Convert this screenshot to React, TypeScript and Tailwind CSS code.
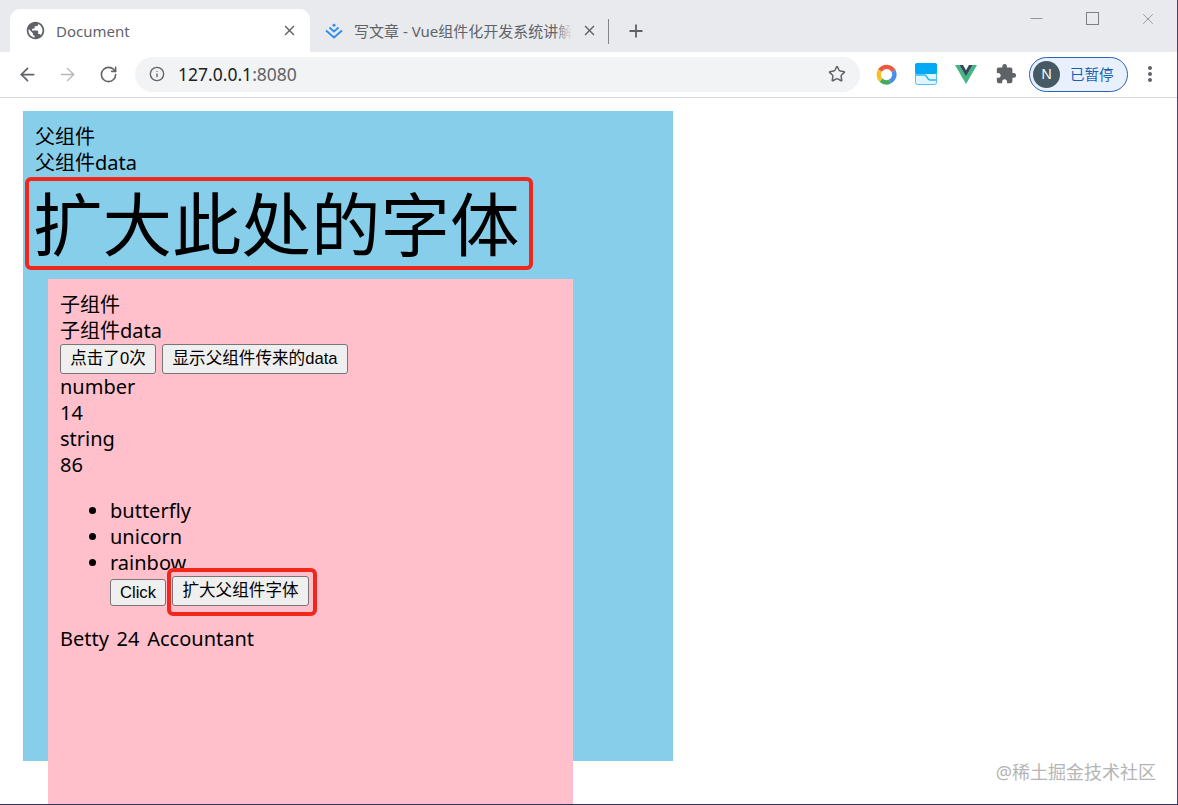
import { ArrowLeft, ArrowRight, Info, Minus, Plus, RotateCw, Star, X } from "lucide-react";
import { MdClose, MdExtension, MdMoreVert, MdPublic } from "react-icons/md";

const pageFont = { fontFamily: '"Noto Sans", "Noto Sans CJK SC", sans-serif' };
const buttonFont = { fontFamily: '"Liberation Sans", "Noto Sans CJK SC", sans-serif' };

function ChromeRing() {
  return (
    <svg width="21" height="21" viewBox="0 0 21 21" fill="none" strokeWidth="4.4">
      <path d="M3.9 6.7A7.9 7.9 0 0 1 17.6 7" stroke="#ea5a3c" />
      <path d="M17.6 7A7.9 7.9 0 0 1 14 17.5" stroke="#4a8cf0" />
      <path d="M14 17.5A7.9 7.9 0 0 1 5 16.2" stroke="#43ab5c" />
      <path d="M5 16.2A7.9 7.9 0 0 1 3.9 6.7" stroke="#f6c026" />
    </svg>
  );
}

function BoardIcon() {
  return (
    <svg width="22" height="22" viewBox="0 0 22 22">
      <rect x="0.5" y="0.5" width="21" height="21" rx="2" fill="#e1f5fe" stroke="#4fc3f7" />
      <rect x="0" y="0" width="22" height="11" rx="2" fill="#03a9f4" />
      <path d="M1 12H10C12 12 12 17 15 17H21" fill="none" stroke="#29b6f6" strokeWidth="1.5" />
    </svg>
  );
}

function VueIcon() {
  return (
    <svg width="22" height="20" viewBox="0 0 22 20">
      <path d="M0 1H4.4L11 12.5L17.6 1H22L11 20Z" fill="#41b883" />
      <path d="M4.4 1H8L11 6.2L14 1H17.6L11 12.5Z" fill="#34495e" />
    </svg>
  );
}

function JuejinIcon() {
  return (
    <svg width="18" height="16" viewBox="0 0 18 16" fill="none" stroke="#2f8cf0" strokeWidth="1.8">
      <path d="M9 0.5L11 2.3L9 4L7 2.3Z" fill="#2f8cf0" stroke="none" />
      <path d="M4.5 4.5L9 8.5L13.5 4.5" />
      <path d="M1 7.5L9 14.5L17 7.5" />
    </svg>
  );
}

function TabBar() {
  return (
    <div className="flex h-[52px] items-end bg-[#e8eaed] pl-[10px]">
      <div className="flex h-[43px] w-[300px] items-center rounded-t-[10px] bg-white pl-[15px] pr-[12px]">
        <MdPublic size={21} className="text-[#5f6368]" />
        <span className="ml-[10px] flex-1 text-[15px] text-[#5f6368]">Document</span>
        <MdClose size={17} className="text-[#5f6368]" />
      </div>
      <div className="flex h-[43px] w-[298px] items-center pl-[15px] pr-[10px]">
        <JuejinIcon />
        <div className="relative ml-[11px] flex-1 overflow-hidden whitespace-nowrap text-[15px] text-[#5f6368]">
          写文章 - Vue组件化开发系统讲解
          <div className="absolute inset-y-0 right-0 w-[18px] bg-gradient-to-r from-transparent to-[#e8eaed]" />
        </div>
        <MdClose size={17} className="ml-[9px] text-[#5f6368]" />
      </div>
      <div className="mb-[8px] h-[25px] w-px bg-[#80868b]" />
      <Plus size={20} strokeWidth={2.2} className="mb-[11px] ml-[17px] text-[#5f6368]" />
      <div className="ml-auto flex items-center gap-[40px] self-start pr-[21px] pt-[9px] text-[#7d7f83]">
        <Minus size={19} strokeWidth={1} />
        <div className="h-[13px] w-[13px] border border-[#7d7f83]" />
        <X size={18} strokeWidth={1} />
      </div>
    </div>
  );
}

function ToolBar() {
  return (
    <div className="flex h-[46px] items-center border-b border-[#d6d8da] bg-white pl-[17px] pb-[1px]">
      <ArrowLeft size={21} strokeWidth={2} className="text-[#5f6368]" />
      <ArrowRight size={21} strokeWidth={1.6} className="ml-[19px] text-[#b4b6b9]" />
      <RotateCw size={19} strokeWidth={2} className="ml-[21px] text-[#5f6368]" />
      <div className="ml-[17px] flex h-[35px] w-[725px] items-center rounded-full bg-[#f1f3f4] pl-[14px] pr-[14px]">
        <Info size={16} strokeWidth={2} className="text-[#5f6368]" />
        <span className="ml-[13px] flex-1 text-[17.5px] text-[#202124]">
          127.0.0.1<span className="text-[#5f6368]">:8080</span>
        </span>
        <Star size={18} strokeWidth={2} className="text-[#5f6368]" />
      </div>
      <div className="ml-[15px] flex w-[22px] justify-center"><ChromeRing /></div>
      <div className="ml-[18px] flex w-[22px] justify-center"><BoardIcon /></div>
      <div className="ml-[18px] flex w-[22px] justify-center"><VueIcon /></div>
      <MdExtension size={22} className="ml-[18px] text-[#5f6368]" />
      <div className="ml-[12px] flex h-[35px] w-[99px] items-center rounded-full border border-[#2a62b5] bg-[#e8f0fe] pl-[3px]">
        <div className="flex h-[27px] w-[27px] items-center justify-center rounded-full bg-[#455a64] text-[14px] text-white">N</div>
        <span className="ml-[10px] text-[14.5px] text-[#1a5fb4]">已暂停</span>
      </div>
      <MdMoreVert size={24} className="ml-[10px] text-[#5f6368]" />
    </div>
  );
}

function NativeButton({ label, className }: { label: string; className: string }) {
  return (
    <button
      className={`rounded-[3px] border border-[#767676] bg-[#efefef] text-[16.6px] text-black ${className}`}
      style={buttonFont}
    >
      {label}
    </button>
  );
}

function Child() {
  return (
    <div className="ml-[13px] w-[525px] bg-[#ffc0cb] pb-[200px] pl-[12px] pr-[12px] pt-[13px]">
      <div>子组件</div>
      <div>子组件data</div>
      <div className="flex gap-[6px]">
        <NativeButton label="点击了0次" className="h-[30px] w-[96px]" />
        <NativeButton label="显示父组件传来的data" className="h-[30px] w-[186px]" />
      </div>
      <div>number</div>
      <div>14</div>
      <div>string</div>
      <div>86</div>
      <ul className="my-[20px] list-disc pl-[50px]">
        <li>butterfly</li>
        <li>unicorn</li>
        <li>rainbow</li>
        <li className="list-none">
          <div className="flex items-end gap-[6px]">
            <NativeButton label="Click" className="h-[27px] w-[56px]" />
            <NativeButton label="扩大父组件字体" className="h-[30px] w-[137px]" />
          </div>
        </li>
      </ul>
      <div className="[word-spacing:2.5px]">Betty 24 Accountant</div>
    </div>
  );
}

export default function App() {
  return (
    <div className="relative h-[805px] overflow-hidden bg-white text-[20px] leading-[26px] text-black" style={pageFont}>
      <TabBar />
      <ToolBar />
      <div className="pl-[23px] pt-[13px]">
        <div className="h-[650px] w-[650px] bg-[#87ceeb] pl-[12px] pr-[12px] pt-[13px]">
          <div>父组件</div>
          <div>父组件data</div>
          <div className="-ml-[2px] h-[103px] whitespace-nowrap text-[69.5px] leading-[97px]">扩大此处的字体</div>
          <Child />
        </div>
      </div>

      {/* red annotation boxes drawn over the page */}
      <div className="absolute left-[25px] top-[177px] h-[93px] w-[508px] rounded-[6px] border-4 border-[#f0271c]" />
      <div className="absolute left-[167px] top-[568px] h-[48px] w-[150px] rounded-[6px] border-4 border-[#f0271c]" />

      <div className="absolute bottom-[20px] right-[22px] text-[18px] leading-[26px] text-[#b5b5b5]">@稀土掘金技术社区</div>
      <div className="absolute inset-y-0 right-0 w-px bg-[#5b3a82]" />
      <div className="absolute inset-x-0 bottom-0 h-px bg-[#33305e]" />
    </div>
  );
}
